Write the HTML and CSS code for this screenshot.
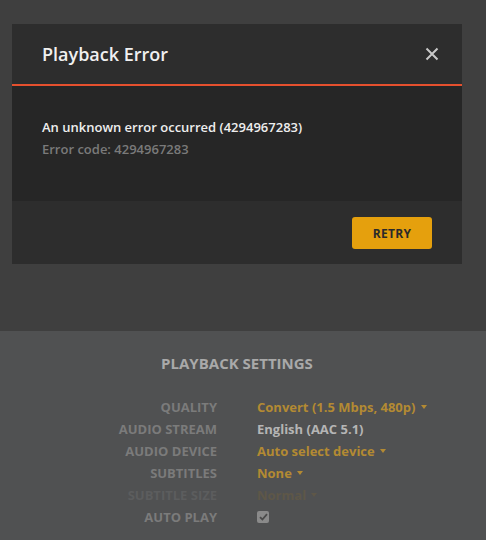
FILE: index.html
```html
<!DOCTYPE html>
<html>
<head>
<meta charset="utf-8">
<link rel="stylesheet" href="styles.css">
</head>
<body>
<div class="top">
  <div class="modal">
    <div class="modal-header">
      <h1 class="title">Playback Error</h1>
      <button class="close" aria-label="Close">
        <svg width="14" height="14" viewBox="0 0 14 14"><path d="M1.5 1.5 L12.5 12.5 M12.5 1.5 L1.5 12.5" stroke="#c8c8c8" stroke-width="2" fill="none"/></svg>
      </button>
    </div>
    <div class="modal-body">
      <div class="msg">An unknown error occurred (4294967283)</div>
      <div class="code">Error code: 4294967283</div>
    </div>
    <div class="modal-footer">
      <button class="retry">RETRY</button>
    </div>
  </div>
</div>
<div class="settings">
  <h2 class="settings-title">PLAYBACK SETTINGS</h2>
  <div class="grid">
    <div class="label">QUALITY</div>
    <div class="value gold">Convert (1.5 Mbps, 480p) <span class="caret"></span></div>
    <div class="label">AUDIO STREAM</div>
    <div class="value plain">English (AAC 5.1)</div>
    <div class="label">AUDIO DEVICE</div>
    <div class="value gold">Auto select device <span class="caret"></span></div>
    <div class="label">SUBTITLES</div>
    <div class="value gold">None <span class="caret"></span></div>
    <div class="label disabled">SUBTITLE SIZE</div>
    <div class="value gold-dim">Normal <span class="caret"></span></div>
    <div class="label">AUTO PLAY</div>
    <div class="value"><span class="checkbox"><svg width="9" height="8" viewBox="0 0 9 8"><path d="M1 4.2 L3.4 6.5 L8 1.2" stroke="#4a4a4a" stroke-width="1.8" fill="none"/></svg></span></div>
  </div>
</div>
</body>
</html>
```

FILE: styles.css
```css
html, body {
  margin: 0;
  padding: 0;
}
body {
  width: 486px;
  height: 540px;
  overflow: hidden;
  font-family: "Open Sans", "Noto Sans", sans-serif;
  background: #505152;
}
.top {
  background: #3f3f3f;
  height: 331px;
  padding: 24px 24px 0 12px;
  box-sizing: border-box;
}
.modal {
  width: 450px;
  background: #262626;
}
.modal-header {
  background: #2d2d2d;
  height: 60px;
  border-bottom: 2px solid #e5502e;
  display: flex;
  align-items: center;
  justify-content: space-between;
  padding: 0 23px 0 30px;
}
.title {
  margin: 0;
  font-size: 18px;
  font-weight: 600;
  color: #f0f0f0;
  line-height: 24px;
}
.close {
  background: none;
  border: 0;
  padding: 0;
  width: 14px;
  height: 14px;
  display: flex;
}
.modal-body {
  height: 115px;
  box-sizing: border-box;
  padding: 31px 30px 0;
}
.msg {
  font-size: 13px;
  font-weight: 600;
  color: #eeeeee;
  line-height: 20px;
}
.code {
  font-size: 13px;
  font-weight: 600;
  color: #7a7a7a;
  line-height: 20px;
  margin-top: 2px;
}
.modal-footer {
  background: #2d2d2d;
  height: 63px;
  display: flex;
  justify-content: flex-end;
  align-items: flex-start;
  padding: 16px 30px 0;
  box-sizing: border-box;
}
.retry {
  width: 80px;
  height: 32px;
  background: #e5a00d;
  border: 0;
  border-radius: 3px;
  font-family: "Open Sans", sans-serif;
  font-weight: 700;
  font-size: 12px;
  color: #2a2a2a;
  letter-spacing: 0.3px;
  padding: 0;
}
.settings {
  padding-top: 22px;
}
.settings-title {
  margin: 0;
  width: 474px;
  text-align: center;
  font-size: 15px;
  font-weight: 700;
  color: #a9a9a9;
  line-height: 20px;
}
.grid {
  display: grid;
  grid-template-columns: 217px 1fr;
  column-gap: 40px;
  margin-top: 23px;
  font-size: 13px;
  font-weight: 700;
  line-height: 22px;
}
.label {
  text-align: right;
  color: #7b7b7b;
}
.label.disabled {
  color: #5c5d5e;
}
.value.gold {
  color: #b38a33;
}
.value.gold-dim {
  color: #5e5748;
}
.value.plain {
  color: #b5b5b5;
}
.caret {
  display: inline-block;
  width: 0;
  height: 0;
  border-left: 3px solid transparent;
  border-right: 3px solid transparent;
  border-top: 4px solid currentColor;
  vertical-align: middle;
  margin-left: 2px;
  position: relative;
  top: -2px;
}
.checkbox {
  display: inline-flex;
  width: 12px;
  height: 12px;
  background: #8a8a8a;
  border-radius: 2px;
  align-items: center;
  justify-content: center;
  vertical-align: middle;
  position: relative;
  top: -2px;
}
```
